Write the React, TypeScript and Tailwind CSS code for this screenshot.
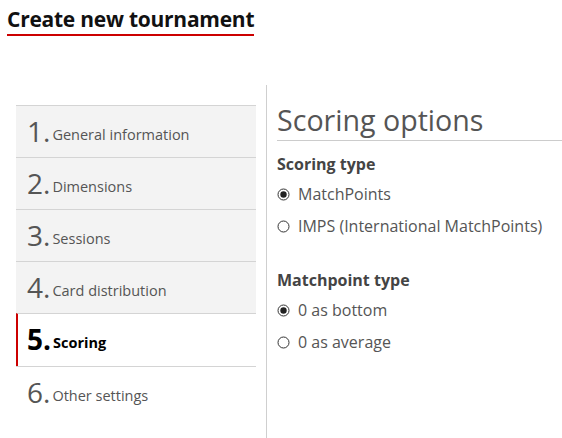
import React from 'react'

type Step = { n: number; label: string; state: 'done' | 'active' | 'todo' }

const steps: Step[] = [
  { n: 1, label: 'General information', state: 'done' },
  { n: 2, label: 'Dimensions', state: 'done' },
  { n: 3, label: 'Sessions', state: 'done' },
  { n: 4, label: 'Card distribution', state: 'done' },
  { n: 5, label: 'Scoring', state: 'active' },
  { n: 6, label: 'Other settings', state: 'todo' },
]

function RadioMark({ checked }: { checked: boolean }) {
  return (
    <svg width="13" height="13" viewBox="0 0 13 13" className="shrink-0">
      <circle cx="6.5" cy="6.5" r="5.5" fill="white" stroke="#333" strokeWidth="1" />
      {checked && <circle cx="6.5" cy="6.5" r="3.2" fill="#222" />}
    </svg>
  )
}

function Radio({ label, checked }: { label: string; checked?: boolean }) {
  return (
    <label className="flex h-[32px] items-center gap-[8px] text-[16px] leading-[24px] text-[#555]">
      <RadioMark checked={!!checked} />
      <span>{label}</span>
    </label>
  )
}

function StepRow({ step }: { step: Step }) {
  const active = step.state === 'active'
  return (
    <div
      className={
        active
          ? 'flex h-[53px] items-center border-t border-l-2 border-t-[#d4d4d4] border-l-[#cc0000] bg-white pb-[2px] pl-[9px] text-black'
          : step.state === 'done'
            ? 'flex h-[52px] items-center border-t border-[#d4d4d4] bg-[#f3f3f3] pb-[2px] pl-[11px] text-[#555]'
            : 'flex h-[52px] items-center border-t border-[#d4d4d4] bg-white pb-[2px] pl-[11px] text-[#555]'
      }
    >
      <span className={active ? 'text-[28px] font-bold leading-[36px]' : 'text-[28px] leading-[36px]'}>{step.n}.</span>
      <span className={active ? 'ml-[2px] mt-[8px] text-[14.5px] font-bold leading-[20px]' : 'ml-[2px] mt-[8px] text-[14.5px] leading-[20px]'}>
        {step.label}
      </span>
    </div>
  )
}

export default function App() {
  return (
    <div className="h-[438px] overflow-hidden bg-white font-['Open_Sans',sans-serif]">
      <div className="pl-[7px] pt-[4px]">
        <h1 className="inline-block border-b-2 border-[#cc0000] text-[21px] font-bold leading-[30px] tracking-[-0.25px] text-[#111]">
          Create new tournament
        </h1>
      </div>

      <div className="mt-[49px] flex">
        <nav className="ml-[16px] mt-[20px] w-[240px] border-b border-[#d4d4d4]">
          {steps.map(step => (
            <StepRow key={step.n} step={step} />
          ))}
        </nav>

        <section className="ml-[10px] h-[360px] flex-1 border-l border-[#cfcfcf] pl-[10px]">
          <h2 className="mt-[17px] border-b border-[#ccc] pb-[2px] text-[28.6px] leading-[36px] text-[#555]">Scoring options</h2>

          <h3 className="mt-[11px] text-[16px] font-bold leading-[24px] text-[#444]">Scoring type</h3>
          <div className="mt-[2px]">
            <Radio label="MatchPoints" checked />
            <Radio label="IMPS (International MatchPoints)" />
          </div>

          <h3 className="mt-[26px] text-[16px] font-bold leading-[24px] text-[#444]">Matchpoint type</h3>
          <div className="mt-[2px]">
            <Radio label="0 as bottom" checked />
            <Radio label="0 as average" />
          </div>
        </section>
      </div>
    </div>
  )
}
